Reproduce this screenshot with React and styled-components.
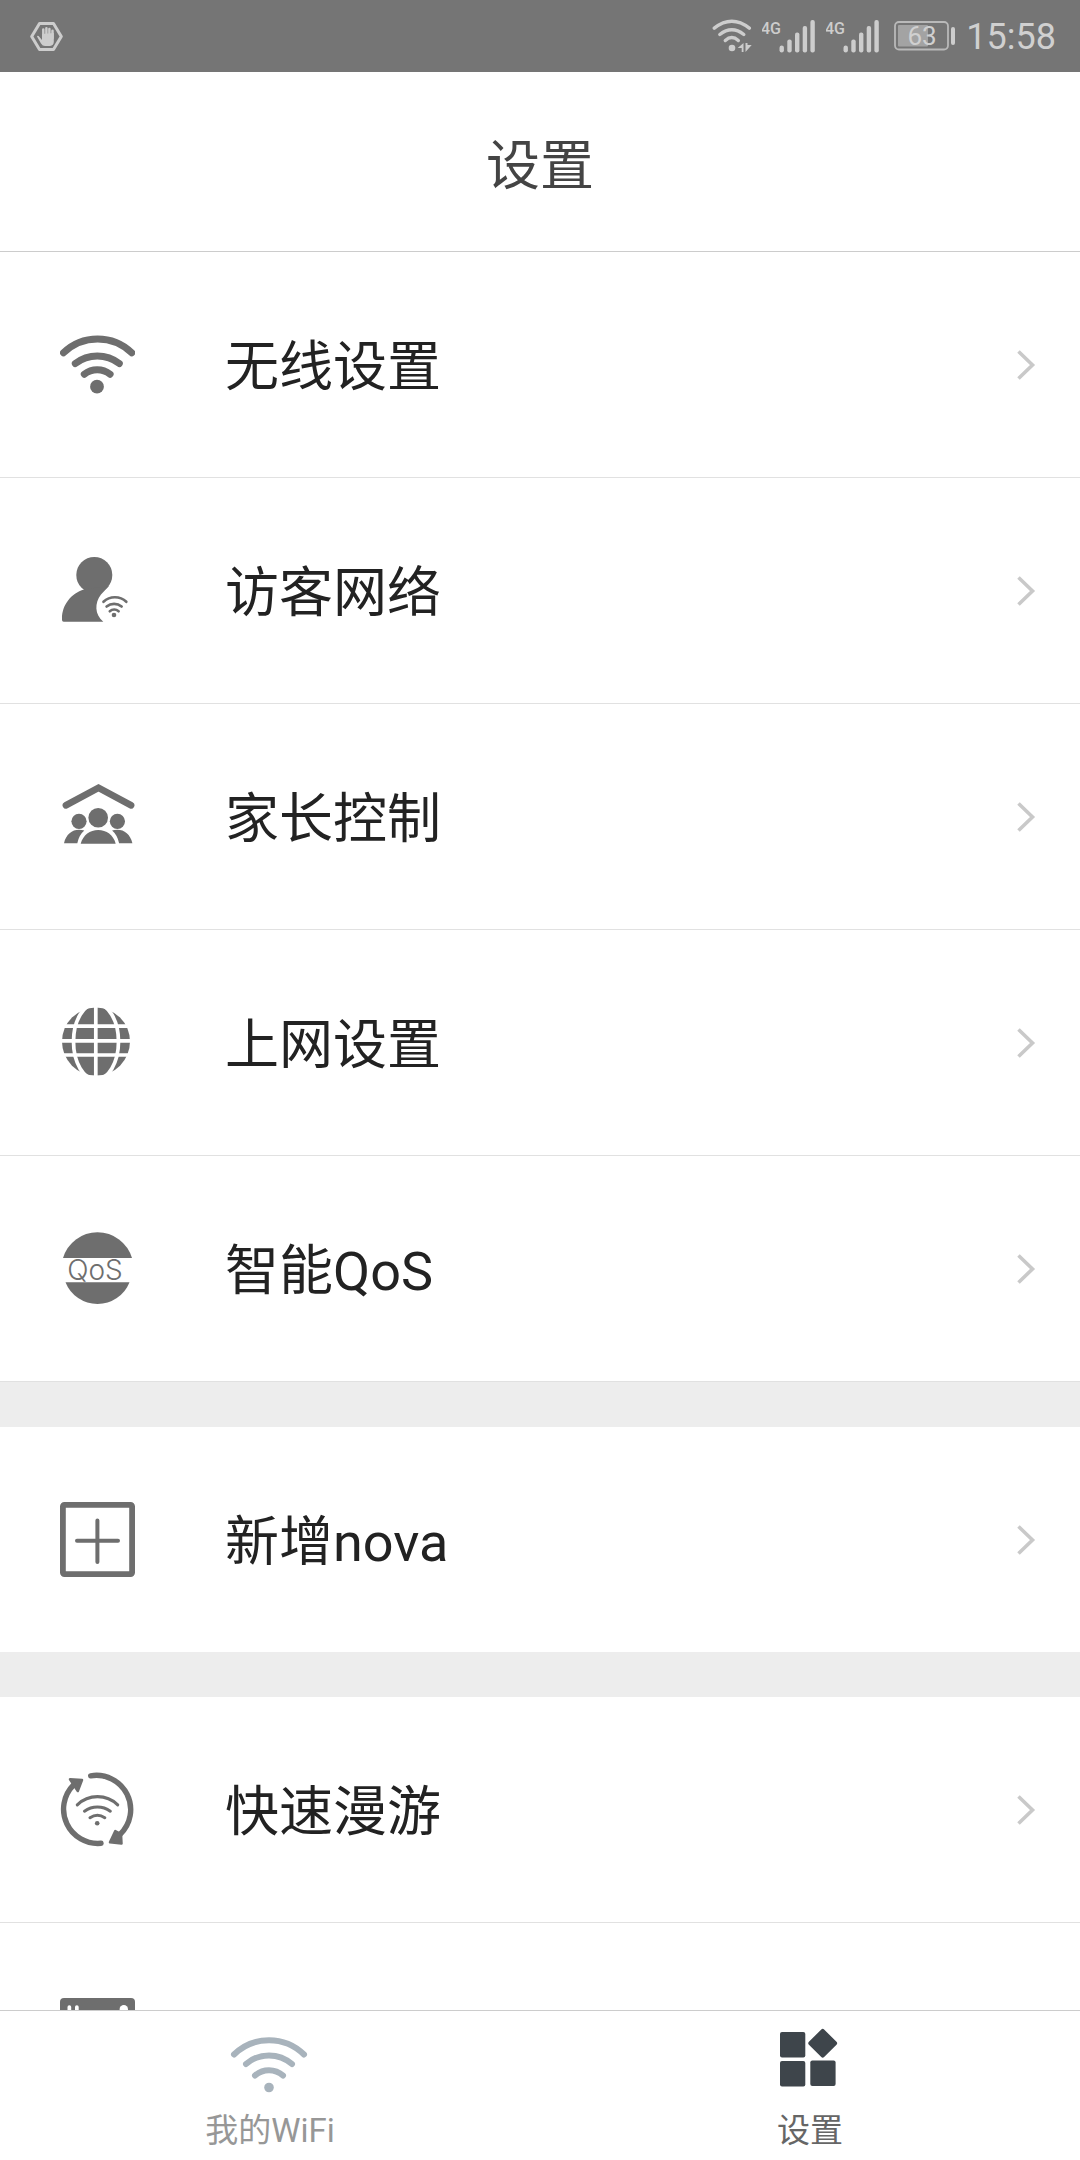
import React from "react";
import styled, { createGlobalStyle } from "styled-components";

const GlobalStyle = createGlobalStyle`
  * {
    box-sizing: border-box;
  }
  body {
    margin: 0;
    background-color: #fff;
    font-family: Roboto, "Noto Sans CJK SC", sans-serif;
  }
`;

export default function App() {
  return (
    <Screen>
      <GlobalStyle />
      <StatusBar>
        <BlockIcon />
        <StatusIcons>
          <StatusWifi />
          <Signal />
          <Signal />
          <Battery />
          <Clock>15:58</Clock>
        </StatusIcons>
      </StatusBar>
      <Header>
        <Title>设置</Title>
      </Header>
      <Content>
        {groups.map((rows, i) => (
          <Group key={i}>
            {rows.map(({ label, hint, Icon }) => (
              <Item key={label || hint}>
                <Row type="button" aria-label={hint}>
                  <Icon />
                  <Label>{label}</Label>
                  {label && <Chevron />}
                </Row>
              </Item>
            ))}
          </Group>
        ))}
      </Content>
      <TabBar>
        <Tab type="button" $color="#979797">
          <TabWifi />
          <span>我的WiFi</span>
        </Tab>
        <Tab type="button" $color="#666" aria-current="page">
          <TabSettings />
          <span>设置</span>
        </Tab>
      </TabBar>
    </Screen>
  );
}

function BlockIcon() {
  return (
    <svg width="33" height="29" viewBox="0 0 33 29" fill="none" stroke="#cdcdcd">
      <path
        d="M9.5 1.5h14l7.8 13-7.8 13h-14l-7.8-13z"
        strokeWidth="3"
        strokeLinejoin="round"
      />
      <path
        d="M13.3 16V7.5M16.4 16V6.2M19.4 16V7M22.5 16V8.8"
        strokeWidth="2.5"
        strokeLinecap="round"
      />
      <path
        d="M12 12v6l-3.4-4q-1.2-.8-1.6.4L11 21.5q1.5 2.5 4 2.5h5q3.7-.5 3.8-4V11z"
        fill="#cdcdcd"
        stroke="none"
      />
    </svg>
  );
}

function StatusWifi() {
  return (
    <svg width="40" height="34" viewBox="0 0 40 34" fill="none" stroke="#cdcdcd">
      <g strokeWidth="3.4" strokeLinecap="round">
        <path d="M2.3 9.2Q19.800-4.5 37.3 9.2" />
        <path d="M7.8 15.5Q19.8 6.2 31.8 15.5" />
        <path d="M13.3 21.5Q19.8 15.6 26.3 21.5" />
      </g>
      <circle cx="20" cy="29" r="3.3" fill="#cdcdcd" stroke="none" />
      <path
        d="M31.5 24v9h-1.8v-4h-4zM33.5 24v9l6.2-7h-4.2v-2z"
        fill="#cdcdcd"
        stroke="none"
      />
    </svg>
  );
}

function Signal() {
  return (
    <svg width="54" height="34" viewBox="0 0 54 34" fill="#cdcdcd">
      <NetworkText x="-1" y="15">
        4G
      </NetworkText>
      <rect x="17.5" y="26.5" width="4.4" height="7" rx="2.2" />
      <rect x="25.3" y="20.5" width="4.4" height="13" rx="2" />
      <rect x="33" y="13.5" width="4.4" height="20" rx="2" />
      <rect x="40.7" y="7" width="4.4" height="26.5" rx="2" />
      <rect x="48.4" y="1" width="4.4" height="32.5" rx="2" />
    </svg>
  );
}

function Battery() {
  return (
    <BatterySvg width="62" height="30" viewBox="0 0 62 30">
      <rect
        x="1"
        y="1"
        width="53"
        height="27.5"
        rx="4"
        fill="none"
        stroke="#b9b9b9"
        strokeWidth="1.8"
      />
      <rect x="4" y="4" width="30" height="21.5" rx="1" fill="#a3a3a3" />
      <rect x="57" y="6" width="4" height="18" rx="2" fill="#cdcdcd" />
      <BatteryText x="28" y="24">
        63
      </BatteryText>
    </BatterySvg>
  );
}

function WirelessIcon() {
  return (
    <Glyph>
      <g fill="none" stroke="#6e6e6e" strokeWidth="7" strokeLinecap="round">
        <path d="M3.5 25.8a49 49 0 0 1 68.2 0" />
        <path d="M15.3 36.6a36 36 0 0 1 44 0" />
        <path d="M24.3 47.2a21 21 0 0 1 25.8 0" />
      </g>
      <circle cx="37" cy="59.7" r="6.9" />
    </Glyph>
  );
}

function GuestIcon() {
  return (
    <Glyph>
      <circle cx="34.3" cy="22" r="18" />
      <path d="M24 36.5C11 40.5 2 52 2 65.5V67q0 1.7 1.7 1.7H43.3C34.5 61.5 34.5 50 41 41.5L49 33z" />
      <g fill="none" stroke="#6e6e6e" strokeWidth="2.7" strokeLinecap="round">
        <path d="M43.5 48.8a16.5 16.5 0 0 1 22.8 0" />
        <path d="M46.6 53.5a12 12 0 0 1 15 0" />
        <path d="M49.8 58.2a7 7 0 0 1 8.8 0" />
      </g>
      <circle cx="54" cy="62" r="2.3" />
    </Glyph>
  );
}

function FamilyIcon() {
  return (
    <Glyph>
      <path
        d="M6 26.3 38.5 8.8 71 26.3"
        fill="none"
        stroke="#6e6e6e"
        strokeWidth="6.8"
        strokeLinecap="round"
      />
      <circle cx="38.2" cy="38.7" r="9.8" />
      <circle cx="19" cy="42.3" r="7.6" />
      <circle cx="57.4" cy="42.3" r="7.6" />
      <path d="M20.7 64.7C23 56 30 51 38.2 51s15.2 5 17.5 13.7z" />
      <path d="M4 64.2C6 55.5 12 50.8 19 50.8q3 0 5.3.7-5.3 4.5-7 12.7z" />
      <path d="M72.4 64.2C70.4 55.5 64.4 50.8 57.4 50.8q-3 0-5.3.7 5.3 4.5 7 12.7z" />
    </Glyph>
  );
}

function GlobeIcon() {
  return (
    <Glyph>
      <circle cx="36" cy="36.6" r="34" />
      <g fill="none" stroke="#fff" strokeWidth="3.7">
        <path d="M0 21.2h72M0 35.8h72M0 50h72M35.8 0v74" />
        <ellipse cx="36" cy="36.6" rx="22.5" ry="38" />
      </g>
    </Glyph>
  );
}

function QosIcon() {
  return (
    <Glyph>
      <path d="M3 27a36 36 0 0 1 69 0z" />
      <path d="M5.5 51.3a34.4 34.4 0 0 0 64 0z" />
      <QosText x="35" y="49">
        QoS
      </QosText>
    </Glyph>
  );
}

function AddIcon() {
  return (
    <Glyph>
      <g fill="none" stroke="#6e6e6e">
        <rect x="2.9" y="2.9" width="69.2" height="69.2" rx="1.5" strokeWidth="5.8" />
        <path d="M17 38.7h41M37.4 18.5v41.5" strokeWidth="4" strokeLinecap="round" />
      </g>
    </Glyph>
  );
}

function RoamingIcon() {
  return (
    <Glyph>
      <g fill="none" stroke="#6e6e6e" strokeLinecap="round">
        <path
          d="M30.7 3.8A34.3 34.3 0 0 1 60 62.5M41 71.3A34.3 34.3 0 0 1 13.5 13"
          strokeWidth="5.4"
        />
        <g strokeWidth="3.1">
          <path d="M17.3 32.8a29 29 0 0 1 40.4 0" />
          <path d="M24.5 39.2a22 22 0 0 1 25.8 0" />
          <path d="M30 45.7a13.5 13.5 0 0 1 14.8 0" />
        </g>
      </g>
      <circle cx="37.2" cy="51.3" r="2.3" />
      <g stroke="#6e6e6e" strokeWidth="2.5" strokeLinejoin="round">
        <path d="M10 7.3 22 8 17.8 19z" />
        <path d="M55.3 59 50 70.3 61.5 71.5 61 62z" />
      </g>
    </Glyph>
  );
}

function RouterIcon() {
  return (
    <Glyph>
      <rect width="75" height="75" rx="4" />
      <g fill="#fff">
        <rect x="7.5" y="7.3" width="3.7" height="14" rx="1.8" />
        <rect x="15" y="7.3" width="3.7" height="14" rx="1.8" />
        <circle cx="63.8" cy="11.3" r="4.2" />
      </g>
    </Glyph>
  );
}

function Chevron() {
  return (
    <svg width="20" height="32" viewBox="0 0 20 32" fill="none">
      <path d="M2.5 2.5 16.5 16 2.5 29.5" stroke="#c9c9c9" strokeWidth="3.6" />
    </svg>
  );
}

function TabWifi() {
  return (
    <TabGlyph>
      <g fill="none" stroke="#a8b3bc" strokeWidth="6" strokeLinecap="round">
        <path d="M3 26.5a50 50 0 0 1 70 0" />
        <path d="M15 36a35 35 0 0 1 46 0" />
        <path d="M24 47.5a21 21 0 0 1 28 0" />
      </g>
      <circle cx="38" cy="59.5" r="4.8" fill="#a8b3bc" />
    </TabGlyph>
  );
}

function TabSettings() {
  return (
    <TabGlyph fill="#3e454b">
      <rect x="9" y="4" width="25.3" height="25.5" rx="2" />
      <rect x="9" y="33" width="25.3" height="25.5" rx="2" />
      <rect x="39.3" y="32.5" width="25.3" height="25.5" rx="2" />
      <rect x="41" y="4.5" width="21.5" height="21.5" rx="2" transform="rotate(45 51.7 15.2)" />
    </TabGlyph>
  );
}

const groups = [
  [
    { label: "无线设置", Icon: WirelessIcon },
    { label: "访客网络", Icon: GuestIcon },
    { label: "家长控制", Icon: FamilyIcon },
    { label: "上网设置", Icon: GlobeIcon },
    { label: "智能QoS", Icon: QosIcon },
  ],
  [{ label: "新增nova", Icon: AddIcon }],
  [
    { label: "快速漫游", Icon: RoamingIcon },
    { hint: "路由器", Icon: RouterIcon },
  ],
];

const Screen = styled.div`
  display: flex;
  flex-direction: column;
  height: 100vh;
  overflow: hidden;
`;

const StatusBar = styled.div`
  display: flex;
  flex-shrink: 0;
  align-items: center;
  justify-content: space-between;
  height: 72px;
  padding: 0 24px 0 30px;
  background-color: #757575;
`;

const StatusIcons = styled.div`
  display: flex;
  align-items: center;
  gap: 10px;
`;

const Clock = styled.span`
  padding-top: 2px;
  font-size: 36px;
  line-height: 40px;
  color: #d0d0d0;
`;

const NetworkText = styled.text`
  font-size: 16px;
  font-weight: 500;
`;

const BatterySvg = styled.svg`
  margin-left: 4px;
`;

const BatteryText = styled.text`
  font-size: 26px;
  text-anchor: middle;
  fill: #d0d0d0;
`;

const Header = styled.header`
  display: flex;
  flex-shrink: 0;
  align-items: center;
  justify-content: center;
  height: 180px;
  padding-top: 10px;
  border-bottom: 1px solid #ccc;
`;

const Title = styled.h1`
  margin: 0;
  font-size: 54px;
  font-weight: normal;
  line-height: 64px;
  color: #444;
`;

const Content = styled.main`
  display: flex;
  flex: 1;
  flex-direction: column;
  gap: 45px;
  min-height: 0;
  overflow: hidden;
  background-color: #ededed;
`;

const Group = styled.ul`
  flex-shrink: 0;
  margin: 0;
  padding: 0;
  list-style: none;
  background-color: #fff;
`;

const Item = styled.li`
  border-bottom: 1px solid #e1e1e1;
  &:only-child {
    border-bottom: none;
  }
`;

const Row = styled.button`
  display: flex;
  align-items: center;
  width: 100%;
  height: 225px;
  padding: 0 44px 0 60px;
  border: none;
  background: none;
  font-family: inherit;
  text-align: left;
  cursor: pointer;
`;

const Glyph = styled.svg.attrs({ viewBox: "0 0 75 75" })`
  flex-shrink: 0;
  width: 75px;
  height: 75px;
  fill: #6e6e6e;
`;

const QosText = styled.text`
  font-family: Inter, "Liberation Sans", sans-serif;
  font-size: 28px;
  font-weight: 300;
  text-anchor: middle;
`;

const Label = styled.span`
  flex: 1;
  margin-left: 90px;
  padding-top: 6px;
  font-size: 54px;
  line-height: 64px;
  color: #222;
`;

const TabBar = styled.nav`
  display: flex;
  flex-shrink: 0;
  height: 150px;
  border-top: 1px solid #ccc;
`;

const Tab = styled.button`
  display: flex;
  flex: 1;
  flex-direction: column;
  align-items: center;
  padding: 17px 0 0;
  border: none;
  background: none;
  font-family: inherit;
  font-size: 33px;
  line-height: 40px;
  color: ${({ $color }) => $color};
  cursor: pointer;
`;

const TabGlyph = styled.svg.attrs({ viewBox: "2 0 75 75" })`
  flex-shrink: 0;
  width: 75px;
  height: 75px;
  margin-bottom: 8px;
  overflow: visible;
`;
